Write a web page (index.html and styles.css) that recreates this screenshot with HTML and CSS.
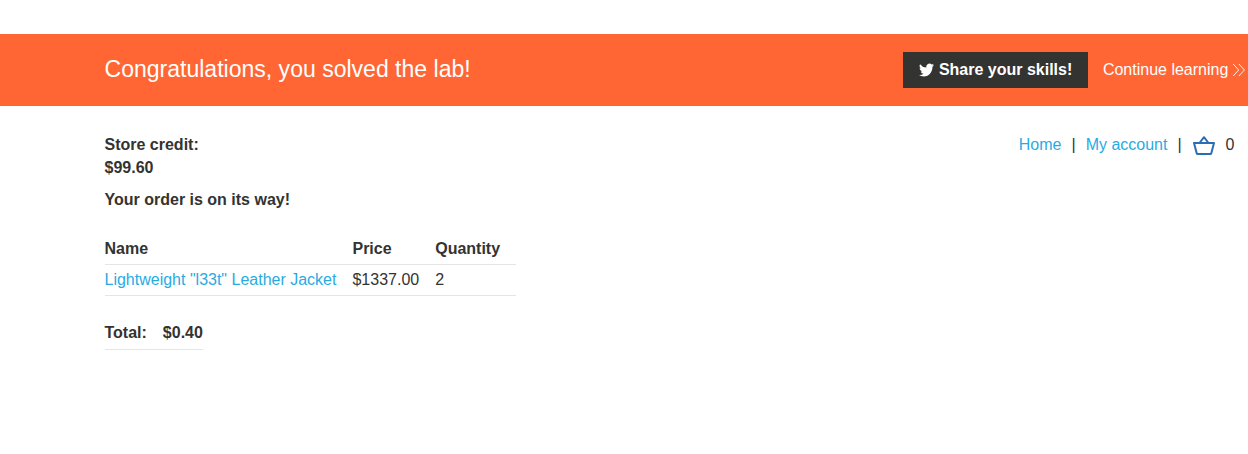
FILE: index.html
```html
<!DOCTYPE html>
<html lang="en">
<head>
<meta charset="utf-8">
<title>Order confirmation</title>
<link rel="stylesheet" href="styles.css">
</head>
<body>
<section class="banner">
  <h1 class="banner-title">Congratulations, you solved the lab!</h1>
  <a class="share"><svg class="bird" viewBox="0 0 24 24" preserveAspectRatio="none"><path d="M24 4.6a10 10 0 0 1-2.800.8 5 5 0 0 0 2.100-2.700 10 10 0 0 1-3.100 1.200 4.900 4.900 0 0 0-8.400 4.500A14 14 0 0 1 1.700 3.200a4.900 4.900 0 0 0 1.500 6.500 5 5 0 0 1-2.200-.6v.1a4.900 4.900 0 0 0 3.900 4.800 5 5 0 0 1-2.200.1 4.900 4.900 0 0 0 4.600 3.400A9.900 9.900 0 0 1 0 19.500a14 14 0 0 0 7.500 2.200c9.100 0 14-7.500 14-14v-.6A10 10 0 0 0 24 4.600z"/></svg>Share your skills!</a>
  <a class="continue">Continue learning<svg class="chevrons" viewBox="0 0 13 14"><path d="M1.200 1l5.500 6-5.500 6M6.900 1l5.500 6-5.500 6"/></svg></a>
</section>
<main class="page">
  <header class="top">
    <div class="credit">Store credit:<br>$99.60</div>
    <nav class="nav"><a class="link">Home</a><span>|</span><a class="link">My account</a><span>|</span><svg class="basket" viewBox="0 0 24 20"><path d="M2 7h20l-2.700 10.200q-.2.800-1 .8H5.700q-.8 0-1-.8zM7.500 7L12 1.200l4.500 5.800"/></svg><span class="count">0</span></nav>
  </header>
  <p class="status">Your order is on its way!</p>
  <table class="items">
    <tr><th>Name</th><th>Price</th><th>Quantity</th></tr>
    <tr><td><a class="link">Lightweight "l33t" Leather Jacket</a></td><td>$1337.00</td><td>2</td></tr>
  </table>
  <table class="total"><tr><th>Total:</th><th>$0.40</th></tr></table>
</main>
</body>
</html>
```
FILE: styles.css
```css
body {
  margin: 0;
  padding-top: 34px;
  background: #fff;
  color: #333332;
  font: 16px/23px "Liberation Sans", Arial, sans-serif;
}
.banner {
  display: flex;
  align-items: center;
  box-sizing: border-box;
  height: 72px;
  padding: 0 2.700px 0 104.500px;
  background: #ff6633;
  color: #fff;
  white-space: nowrap;
}
.banner-title {
  margin: 0 auto 0 0;
  padding-bottom: 2px;
  font-size: 23.040px;
  font-weight: 400;
  line-height: 32px;
}
.share {
  display: flex;
  align-items: center;
  box-sizing: border-box;
  width: 185px;
  height: 36px;
  margin-right: 15px;
  padding: 0 0 1px 16px;
  background: #333332;
  font-weight: 700;
}
.bird { width: 15px; height: 16px; margin-right: 5px; fill: #fff; }
.continue { display: flex; align-items: center; padding-bottom: 1px; }
.chevrons { width: 13px; height: 14px; margin: 1px 0 0 4px; fill: none; stroke: #fff; stroke-width: 0.9; }
.page { padding: 27px 13.500px 0 104.500px; }
.top { display: flex; justify-content: space-between; }
.credit { font-weight: 700; }
.nav { display: flex; align-items: flex-start; gap: 10px; }
.link { color: #29abe2; }
.basket { width: 24px; height: 20px; margin-top: 3px; fill: none; stroke: #2a6db5; stroke-width: 2; stroke-linejoin: round; }
.status { margin: 9px 0 23px; font-weight: 700; }
table { border-collapse: separate; border-spacing: 0; }
th, td { text-align: left; border-bottom: 1px solid #e5e5e5; }
.items th, .items td { height: 23px; padding: 3px 16px 4px 0; }
.total { margin-top: 20px; }
.total th { height: 33px; padding: 0 16px 0 0; }
.total th:last-child { padding-right: 0; }
```
